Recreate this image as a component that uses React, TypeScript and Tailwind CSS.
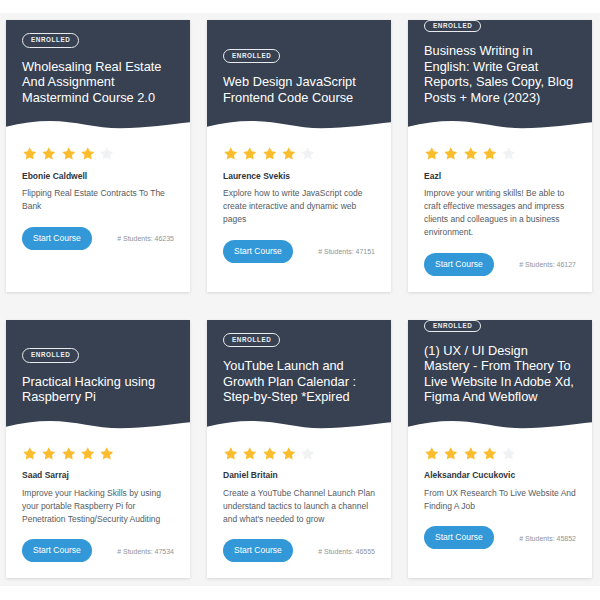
import React from 'react';

interface Course {
  title: string;
  author: string;
  description: string;
  students: number;
  rating: number;
}

const courses: Course[] = [
  {
    title: 'Wholesaling Real Estate And Assignment Mastermind Course 2.0',
    author: 'Ebonie Caldwell',
    description: 'Flipping Real Estate Contracts To The Bank',
    students: 46235,
    rating: 4,
  },
  {
    title: 'Web Design JavaScript Frontend Code Course',
    author: 'Laurence Svekis',
    description: 'Explore how to write JavaScript code create interactive and dynamic web pages',
    students: 47151,
    rating: 4,
  },
  {
    title: 'Business Writing in English: Write Great Reports, Sales Copy, Blog Posts + More (2023)',
    author: 'Eazl',
    description:
      'Improve your writing skills! Be able to craft effective messages and impress clients and colleagues in a business environment.',
    students: 46127,
    rating: 4,
  },
  {
    title: 'Practical Hacking using Raspberry Pi',
    author: 'Saad Sarraj',
    description: 'Improve your Hacking Skills by using your portable Raspberry Pi for Penetration Testing/Security Auditing',
    students: 47534,
    rating: 5,
  },
  {
    title: 'YouTube Launch and Growth Plan Calendar : Step-by-Step *Expired',
    author: 'Daniel Britain',
    description: "Create a YouTube Channel Launch Plan understand tactics to launch a channel and what's needed to grow",
    students: 46555,
    rating: 4,
  },
  {
    title: '(1) UX / UI Design Mastery - From Theory To Live Website In Adobe Xd, Figma And Webflow',
    author: 'Aleksandar Cucukovic',
    description: 'From UX Research To Live Website And Finding A Job',
    students: 45852,
    rating: 4,
  },
];

const Star: React.FC<{ filled: boolean }> = ({ filled }) => (
  <svg viewBox="0 0 24 24" className="w-[15.5px] h-[15.5px]">
    <path
      d="M12 2l3.09 6.26L22 9.27l-5 4.87 1.18 6.88L12 17.77l-6.18 3.25L7 14.14 2 9.27l6.91-1.01L12 2z"
      fill={filled ? '#fbbd2e' : '#f1f2f3'}
    />
  </svg>
);

const CourseCard: React.FC<{ course: Course }> = ({ course }) => {
  return (
    <div className="bg-white flex flex-col shadow-[0_1px_3px_rgba(0,0,0,0.12)]">
      <div className="relative h-[110px] overflow-hidden bg-[#374151] flex flex-col justify-end px-4 pb-[25px]">
        <span className="self-start h-[14.5px] flex items-center px-[8px] rounded-full border-[1.5px] border-[#e8eaee] text-[6.3px] font-bold tracking-[0.6px] text-[#eef0f3] leading-none">
          ENROLLED
        </span>
        <h2 className="mt-[11px] text-[12.8px] leading-[15.4px] text-white">{course.title}</h2>
        {/* wave */}
        <svg
          viewBox="0 0 184 10"
          preserveAspectRatio="none"
          className="absolute left-0 bottom-0 w-full h-[10px]"
        >
          <path
            d="M0 6.7 C15 3 30 1 44 1 C70 1 90 8.3 114 8.3 C140 8.3 165 4 184 2.3 L184 10 L0 10 Z"
            fill="#ffffff"
          />
        </svg>
      </div>

      <div className="px-4 pt-4 pb-4 flex flex-col">
        <div className="flex gap-[3.8px]">
          {[1, 2, 3, 4, 5].map((s) => (
            <Star key={s} filled={s <= course.rating} />
          ))}
        </div>
        <p className="mt-2 text-[8.5px] leading-[12px] font-bold text-[#2f3540]">{course.author}</p>
        <p className="mt-[5.5px] text-[8.5px] leading-[13px] text-[#555b63]">{course.description}</p>
        <div className="mt-[13.5px] flex items-center justify-between">
          <button className="h-[23px] px-[11px] rounded-full bg-[#3298d8] text-white text-[8.5px]">
            Start Course
          </button>
          <span className="mt-[3px] text-[7px] text-[#8f9499]"># Students: {course.students}</span>
        </div>
      </div>
    </div>
  );
};

export default function App() {
  return (
    <div className="bg-white min-h-[600px] pt-[13px]" style={{ fontFamily: '"Liberation Sans", Arial, sans-serif' }}>
      <div className="bg-[#f5f5f6] pt-[7px] pb-[8px] pl-[6px]">
        <div className="grid grid-cols-[184px_184px_184px] gap-x-[17px] gap-y-[28px]">
          {courses.map((c) => (
            <CourseCard key={c.title} course={c} />
          ))}
        </div>
      </div>
    </div>
  );
}
